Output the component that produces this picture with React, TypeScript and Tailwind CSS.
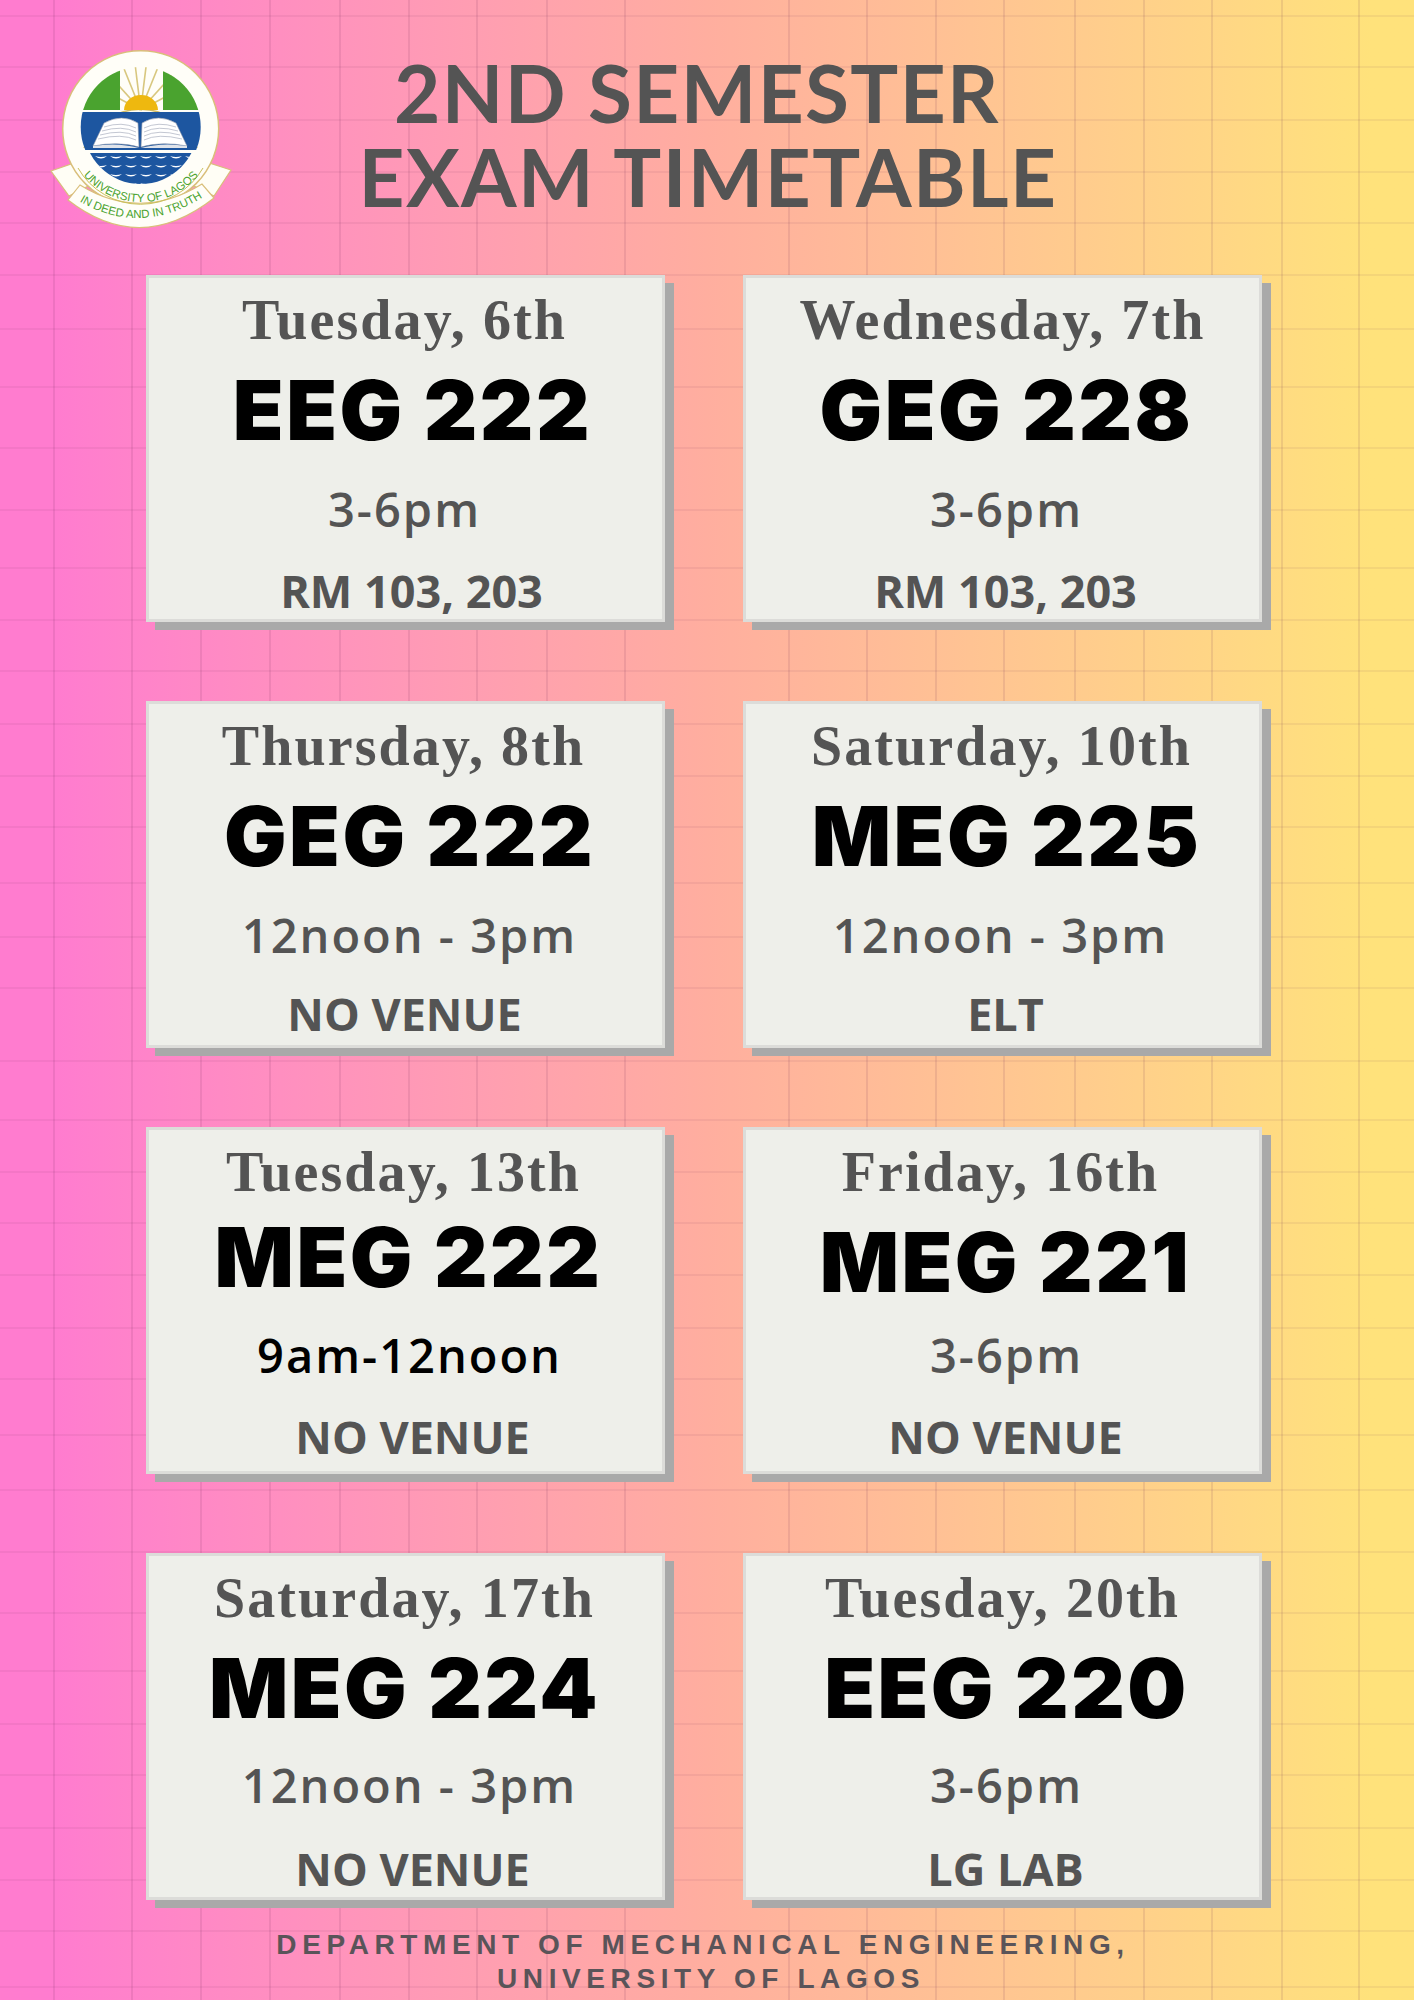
const vLines = [54, 132, 201, 270, 340, 409, 477, 547, 625, 789, 867, 936, 1004, 1075, 1144, 1212, 1282, 1359];
const hLines = [
  16, 67, 120, 172, 223, 275, 329, 387, 448, 510, 568, 620, 671, 724, 776, 827, 883, 937, 988, 1061, 1120, 1172, 1223,
  1275, 1328, 1379, 1435, 1490, 1552, 1613, 1671, 1724, 1775, 1828, 1880, 1931, 1987,
];

type Exam = {
  day: string;
  code: string;
  time: string;
  venue: string;
  dayClass: string;
  codeClass: string;
  timeClass: string;
  venueClass: string;
};

const exams: Exam[] = [
  {
    day: 'Tuesday, 6th',
    code: 'EEG 222',
    time: '3-6pm',
    venue: 'RM 103, 203',
    dayClass: '-translate-x-[1px]',
    codeClass: 'translate-x-[7px]',
    timeClass: '-translate-x-[1px]',
    venueClass: 'translate-x-[6px]',
  },
  {
    day: 'Wednesday, 7th',
    code: 'GEG 228',
    time: '3-6pm',
    venue: 'RM 103, 203',
    dayClass: '',
    codeClass: 'translate-x-[4px]',
    timeClass: 'translate-x-[4px]',
    venueClass: 'translate-x-[3px]',
  },
  {
    day: 'Thursday, 8th',
    code: 'GEG 222',
    time: '12noon - 3pm',
    venue: 'NO VENUE',
    dayClass: '-translate-x-[2px]',
    codeClass: 'translate-x-[4px]',
    timeClass: 'translate-x-[4px]',
    venueClass: '-translate-x-[1px] -translate-y-[3px]',
  },
  {
    day: 'Saturday, 10th',
    code: 'MEG 225',
    time: '12noon - 3pm',
    venue: 'ELT',
    dayClass: '-translate-x-[1px]',
    codeClass: 'translate-x-[4px]',
    timeClass: '-translate-x-[2px]',
    venueClass: 'translate-x-[3px] -translate-y-[3px]',
  },
  {
    day: 'Tuesday, 13th',
    code: 'MEG 222',
    time: '9am-12noon',
    venue: 'NO VENUE',
    dayClass: '-translate-x-[2px]',
    codeClass: 'translate-x-[3px] -translate-y-[5px]',
    timeClass: 'translate-x-[4px] -translate-y-[6px] text-black',
    venueClass: 'translate-x-[7px] -translate-y-[6px]',
  },
  {
    day: 'Friday, 16th',
    code: 'MEG 221',
    time: '3-6pm',
    venue: 'NO VENUE',
    dayClass: '-translate-x-[2px]',
    codeClass: 'translate-x-[3px]',
    timeClass: 'translate-x-[4px] -translate-y-[6px]',
    venueClass: 'translate-x-[3px] -translate-y-[6px]',
  },
  {
    day: 'Saturday, 17th',
    code: 'MEG 224',
    time: '12noon - 3pm',
    venue: 'NO VENUE',
    dayClass: '-translate-x-[1px]',
    codeClass: '-translate-x-[1px]',
    timeClass: 'translate-x-[4px] -translate-y-[2px]',
    venueClass: 'translate-x-[7px]',
  },
  {
    day: 'Tuesday, 20th',
    code: 'EEG 220',
    time: '3-6pm',
    venue: 'LG LAB',
    dayClass: '',
    codeClass: 'translate-x-[4px]',
    timeClass: 'translate-x-[4px] -translate-y-[2px]',
    venueClass: 'translate-x-[3px]',
  },
];

function Logo() {
  const rays = [-62, -42, -22, -7, 7, 22, 42, 62];
  const waveRows = [126, 135, 144, 153];
  return (
    <svg viewBox="0 0 220 220" className="h-[220px] w-[220px] shrink-0" aria-label="University of Lagos crest">
      <defs>
        <clipPath id="crest">
          <circle cx="110.7" cy="97" r="60" />
        </clipPath>
        <clipPath id="waves">
          <circle cx="110.7" cy="97" r="57" />
        </clipPath>
        <path id="arc-name" d="M43 129 A75 75 0 0 0 178.7 129" />
        <path id="arc-motto" d="M44 168 Q110 210 178 164" />
      </defs>
      <path d="M21 141 L47 132 L66 152 L39 166 Z" fill="#fffef5" stroke="#d9bf7a" strokeWidth="1.2" />
      <path d="M201 140 L176 132 L156 152 L184 166 Z" fill="#fffef5" stroke="#d9bf7a" strokeWidth="1.2" />
      <circle cx="110.7" cy="98.7" r="78" fill="#fffef8" stroke="#d9bf7a" strokeWidth="1.5" />
      <path
        d="M38 170 L50 155 Q110 192 172 154 L184 168 Q110 226 38 170 Z"
        fill="#fffef8"
        stroke="#d9bf7a"
        strokeWidth="1.2"
      />
      <path d="M54 118 A60.5 60.5 0 0 1 167 118" fill="none" stroke="#d2bb63" strokeWidth="1.5" />
      <path d="M48 134 A72 72 0 0 0 173 134" fill="none" stroke="#c9c05a" strokeWidth="1" transform="translate(0 4)" />
      <g clipPath="url(#crest)">
        {rays.map((angle) => (
          <line
            key={angle}
            x1="110.7"
            y1="80"
            x2={110.7 + 50 * Math.sin((angle * Math.PI) / 180)}
            y2={80 - 50 * Math.cos((angle * Math.PI) / 180)}
            stroke="#d8c77e"
            strokeWidth="1.6"
          />
        ))}
        <rect x="50" y="36" width="40" height="44" fill="#4aa32f" />
        <rect x="133" y="36" width="40" height="44" fill="#4aa32f" />
        <path d="M94 80 A17 15 0 0 1 128 80 Z" fill="#eeb80f" />
        <rect x="50" y="82" width="122" height="38" fill="#1d56a0" />
      </g>
      <g clipPath="url(#waves)">
        <rect x="50" y="123" width="122" height="31" fill="#1d56a0" />
        {waveRows.map((y) =>
          [56, 71, 86, 101, 116, 131, 146, 161].map((x) => (
            <path key={`${x}-${y}`} d={`M${x - 6} ${y} Q${x} ${y + 5} ${x + 6} ${y} Q${x} ${y + 2} ${x - 6} ${y} Z`} fill="#ffffff" />
          )),
        )}
      </g>
      <path d="M63 116 L74 93 Q92 83 108 93 L109 117 Q88 111 63 116 Z" fill="#ffffff" stroke="#8a93a8" strokeWidth="0.6" />
      <path d="M157 116 L146 93 Q128 83 112 93 L111 117 Q132 111 157 116 Z" fill="#ffffff" stroke="#8a93a8" strokeWidth="0.6" />
      {[97, 101, 105, 109].map((y) => (
        <g key={y} stroke="#9aa1b3" strokeWidth="0.6" fill="none">
          <path d={`M${74 - (y - 97) / 2} ${y} Q92 ${y - 6} 106 ${y + 1}`} />
          <path d={`M${146 + (y - 97) / 2} ${y} Q128 ${y - 6} 114 ${y + 1}`} />
        </g>
      ))}
      <path d="M63 116 Q88 112 109 118 L111 118 Q132 112 157 116 L157 118 L63 118 Z" fill="#dfe3ea" />
      <text fontFamily="Liberation Sans, sans-serif" fontSize="11.5" fill="#4aa32f">
        <textPath href="#arc-name" startOffset="50%" textAnchor="middle">
          UNIVERSITY OF LAGOS
        </textPath>
      </text>
      <text fontFamily="Liberation Sans, sans-serif" fontSize="11.5" fill="#4aa32f">
        <textPath href="#arc-motto" startOffset="50%" textAnchor="middle">
          IN DEED AND IN TRUTH
        </textPath>
      </text>
    </svg>
  );
}

function ExamCard({ exam }: { exam: Exam }) {
  return (
    <article className="h-[347px] border-[3px] border-[#dcdcd9] bg-[#eeefea] pt-[12px] text-center shadow-[9px_8px_0_#a9a9a9]">
      <p className={`font-['Liberation_Serif',serif] text-[56px] font-bold leading-[60px] tracking-[2.1px] text-[#545454] ${exam.dayClass}`}>
        {exam.day}
      </p>
      <p className={`mt-[15px] font-['Inter',sans-serif] text-[83px] font-black leading-[90px] tracking-[2.5px] text-black ${exam.codeClass}`}>
        {exam.code}
      </p>
      <p className={`mt-[26px] font-['Open_Sans',sans-serif] text-[47px] font-semibold leading-[56px] tracking-[2px] text-[#545454] ${exam.timeClass}`}>
        {exam.time}
      </p>
      <p className={`mt-[26px] font-['Open_Sans',sans-serif] text-[45px] font-bold leading-[56px] text-[#545454] ${exam.venueClass}`}>
        {exam.venue}
      </p>
    </article>
  );
}

export default function App() {
  return (
    <main className="relative h-[2000px] w-[1414px] overflow-hidden bg-linear-to-r from-[#ff7ccf] from-4% via-[#ffae9f] via-50% to-[#ffe27b] to-97%">
      <svg className="absolute inset-0 h-full w-full" viewBox="0 0 1414 2000" aria-hidden="true">
        {vLines.map((x) => (
          <line key={x} x1={x} y1="0" x2={x} y2="2000" stroke="#6a2a55" strokeOpacity="0.22" />
        ))}
        {hLines.map((y) => (
          <line key={y} x1="0" y1={y} x2="1414" y2={y} stroke="#6a2a55" strokeOpacity="0.14" />
        ))}
      </svg>

      <div className="relative">
        <header className="flex h-[275px] items-start pl-[30px] pt-[30px]">
          <Logo />
          <h1 className="w-[924px] pt-[20px] text-center font-['Lato',sans-serif] text-[80px] font-bold leading-[84px] tracking-[1.4px] text-[#545454]">
            <span className="block -translate-x-[15px]">2ND SEMESTER</span>
            <span className="block -translate-x-[4px]">EXAM TIMETABLE</span>
          </h1>
        </header>

        <section className="ml-[146px] grid grid-cols-[519px_519px] gap-x-[78px] gap-y-[79px]">
          {exams.map((exam) => (
            <ExamCard key={exam.day} exam={exam} />
          ))}
        </section>

        <footer className="mt-[28px] pr-[12px] text-center font-['Liberation_Sans',sans-serif] text-[28px] font-bold leading-[34px] tracking-[5.6px] text-[#5a5459]">
          <p className="translate-x-[2px]">DEPARTMENT OF MECHANICAL ENGINEERING,</p>
          <p className="translate-x-[10px]">UNIVERSITY OF LAGOS</p>
        </footer>
      </div>
    </main>
  );
}
